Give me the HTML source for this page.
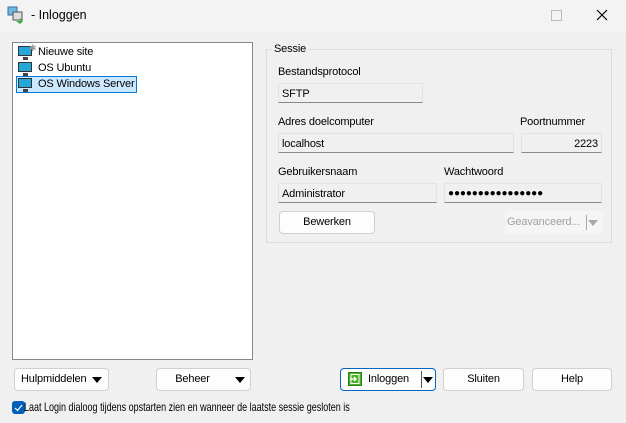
<!DOCTYPE html>
<html><head><style>
body{margin:0;width:626px;height:423px;overflow:hidden;background:#f0f0f0;font-family:"Liberation Sans",sans-serif;font-size:11px;letter-spacing:-0.15px;color:#000;position:relative}
.a{position:absolute}
.fld{position:absolute;background:#f0f0f0;border:1px solid #e3e3e3;border-bottom:1px solid #8a8a8a;box-sizing:border-box;padding:3px 3px 0 3px;line-height:14px}
.btn{position:absolute;background:#fdfdfd;border:1px solid #d0d0d0;border-radius:4px;box-sizing:border-box;text-align:center;line-height:21px}
.tri{position:absolute;width:0;height:0;border-left:5px solid transparent;border-right:5px solid transparent;border-top:6px solid #000}
.mon{position:absolute;width:14px;height:10px;background:#27a6d8;border:1px solid #333;box-sizing:border-box}
.mon:after{content:"";position:absolute;left:4px;top:10px;width:5px;height:3px;background:#444}
</style></head><body>
<div class="a" style="left:0;top:0;width:626px;height:32px;background:#f3f3f3"></div>
<svg class="a" style="left:7px;top:6px" width="18" height="18"><rect x="1" y="1" width="9" height="8" fill="#6cb9e4" stroke="#3a6ea5"/><rect x="6" y="6" width="9" height="8" fill="#ddd" stroke="#555"/><path d="M9 15l4 0 0-3 3 3-3 3z" fill="#3bab3b"/></svg>
<div class="a" style="left:31px;top:8px;font-size:12.5px;letter-spacing:0">- Inloggen</div>
<div class="a" style="left:551px;top:10px;width:9px;height:9px;border:1px solid #bbb"></div>
<svg class="a" style="left:596px;top:9px" width="12" height="12"><path d="M1 1L11 11M11 1L1 11" stroke="#000" stroke-width="1.2"/></svg>

<div class="a" style="left:12px;top:42px;width:241px;height:318px;background:#fff;border:1px solid #828790;box-sizing:border-box"></div>
<div class="mon" style="left:18px;top:46px"></div><div class="a" style="left:29px;top:43px;color:#999;font-size:9px">✱</div>
<div class="a" style="left:38px;top:46px">Nieuwe site</div>
<div class="mon" style="left:18px;top:62px"></div>
<div class="a" style="left:38px;top:62px">OS Ubuntu</div>
<div class="a" style="left:16px;top:76px;width:121px;height:17px;background:#cce8ff;border:1px solid #0078d7;box-sizing:border-box"></div>
<div class="mon" style="left:18px;top:78px"></div>
<div class="a" style="left:38px;top:78px">OS Windows Server</div>

<div class="a" style="left:266px;top:49px;width:346px;height:194px;border:1px solid #dcdcdc;box-sizing:border-box"></div>
<div class="a" style="left:272px;top:43px;background:#f0f0f0;padding:0 2px">Sessie</div>
<div class="a" style="left:278px;top:66px">Bestandsprotocol</div>
<div class="fld" style="left:278px;top:83px;width:145px;height:20px">SFTP</div>
<div class="a" style="left:278px;top:116px">Adres doelcomputer</div>
<div class="fld" style="left:278px;top:133px;width:236px;height:20px">localhost</div>
<div class="a" style="left:520px;top:116px">Poortnummer</div>
<div class="fld" style="left:521px;top:133px;width:81px;height:20px;text-align:right">2223</div>
<div class="a" style="left:278px;top:166px">Gebruikersnaam</div>
<div class="fld" style="left:278px;top:183px;width:159px;height:20px">Administrator</div>
<div class="a" style="left:444px;top:166px">Wachtwoord</div>
<div class="fld" style="left:444px;top:183px;width:158px;height:20px;font-size:10px;letter-spacing:-0.1px">●●●●●●●●●●●●●●●●</div>
<div class="btn" style="left:279px;top:211px;width:96px;height:23px">Bewerken</div>
<div class="a" style="left:505px;top:211px;width:96px;height:23px;background:#f5f5f5;border-radius:3px;color:#a0a0a0;line-height:23px;padding-left:2px">Geavanceerd...</div>
<div class="a" style="left:586px;top:215px;width:1px;height:15px;background:#aaa"></div>
<div class="tri" style="left:588px;top:220px;border-top-color:#aaa"></div>

<div class="btn" style="left:14px;top:368px;width:95px;height:23px;text-align:left;padding-left:6px">Hulpmiddelen</div><div class="tri" style="left:92px;top:377px"></div>
<div class="btn" style="left:156px;top:368px;width:95px;height:23px;padding-right:22px">Beheer</div><div class="tri" style="left:235px;top:377px"></div>
<div class="btn" style="left:340px;top:368px;width:96px;height:23px;border:1px solid #0067c0;text-align:left;padding-left:27px">Inloggen</div>
<svg class="a" style="left:348px;top:372px" width="14" height="14"><rect x="0.5" y="0.5" width="13" height="13" fill="#4caf2a" stroke="#2e7d17"/><rect x="3" y="2.5" width="8" height="9" fill="none" stroke="#fff"/><path d="M2 7h6M6 5l2 2-2 2" stroke="#fff" fill="none" stroke-width="1.3"/></svg>
<div class="a" style="left:421px;top:371px;width:1px;height:17px;background:#555"></div>
<div class="tri" style="left:423px;top:377px"></div>
<div class="btn" style="left:443px;top:368px;width:81px;height:23px">Sluiten</div>
<div class="btn" style="left:532px;top:368px;width:80px;height:23px">Help</div>

<div class="a" style="left:12px;top:401px;width:13px;height:13px;background:#005fb8;border-radius:3px"></div>
<svg class="a" style="left:12px;top:401px" width="13" height="13"><path d="M3 7l2.5 2.5L10 4" stroke="#fff" fill="none" stroke-width="1.2"/></svg>
<div class="a" style="left:24px;top:400px;font-size:12px;letter-spacing:0;white-space:nowrap;transform:scaleX(0.75);transform-origin:0 0">Laat Login dialoog tijdens opstarten zien en wanneer de laatste sessie gesloten is</div>
</body></html>
